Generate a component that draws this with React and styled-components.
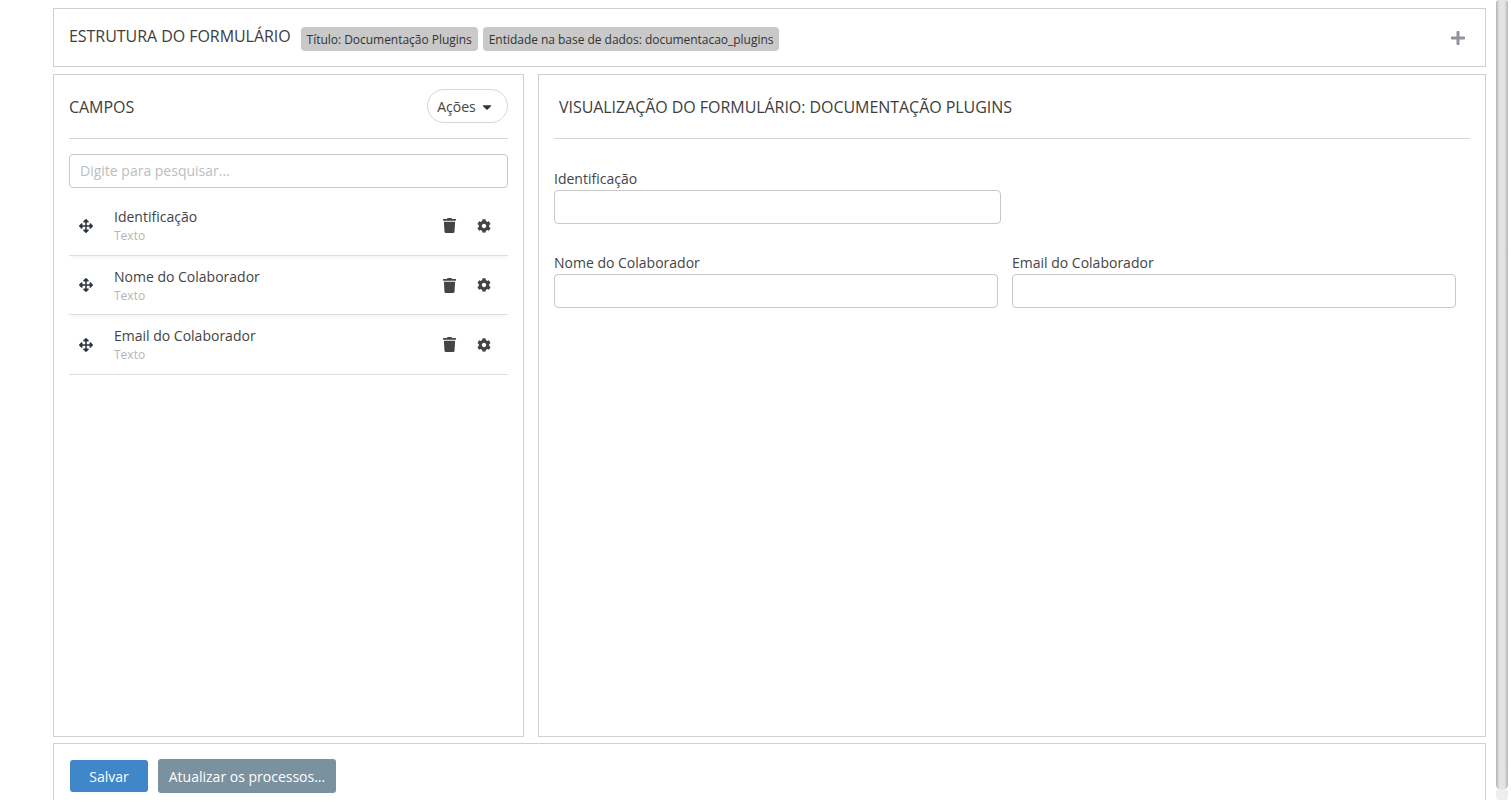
import React from "react";
import styled, { createGlobalStyle } from "styled-components";
import { FaArrowsAlt, FaTrash, FaCog, FaPlus, FaCaretDown } from "react-icons/fa";

const Global = createGlobalStyle`
  html, body { margin: 0; padding: 0; height: 100%; overflow: hidden; background: #fff; }
  body { font-family: "Open Sans", "Liberation Sans", sans-serif; color: #444; }
  * { box-sizing: border-box; }
`;

const Page = styled.div`
  display: flex;
  align-items: flex-start;
  height: 806px;
  width: 1511px;
  overflow: hidden;
`;
const Main = styled.main`
  margin-left: 53px;
  padding-top: 8px;
  display: flex;
  flex-direction: column;
  flex: none;
  width: 1433px;
  height: 800px;
`;
const Panel = styled.section`
  border: 1px solid #d0d0d0;
  background: #fff;
`;
const TopBar = styled(Panel)`
  height: 59px;
  flex: none;
  display: flex;
  align-items: center;
  padding: 0 19px 3px 15px;
`;
const Title = styled.h2`
  margin: 0;
  font-size: 16px;
  line-height: 22px;
  font-weight: 400;
  letter-spacing: -0.05px;
  color: #3d3d3d;
  white-space: nowrap;
`;
const PanelTitle = styled(Title)`
  margin-top: 2px;
`;
const PreviewTitle = styled(PanelTitle)`
  margin-left: 5px;
`;
const Badges = styled.div`
  display: flex;
  gap: 5px;
  margin-left: 10px;
  margin-top: 6px;
`;
const Badge = styled.span`
  height: 24px;
  padding: 0 6px;
  display: flex;
  align-items: center;
  background: #c9c9c9;
  border-radius: 4px;
  font-size: 12px;
  letter-spacing: -0.03px;
  color: #333;
  white-space: nowrap;
`;
const Expand = styled.span`
  margin-left: auto;
  display: flex;
  color: #8f939b;
  font-size: 16px;
  margin-top: 3px;
`;
const Columns = styled.div`
  display: flex;
  flex: none;
  gap: 14px;
  margin-top: 7px;
  height: 663px;
`;
const LeftPanel = styled(Panel)`
  width: 471px;
  flex: none;
  padding: 0 15px;
`;
const RightPanel = styled(Panel)`
  flex: 1;
  padding: 0 15px;
`;
const PanelHead = styled.header`
  height: 64px;
  border-bottom: 1px solid #d4d4d4;
  display: flex;
  align-items: center;
  justify-content: space-between;
  padding-bottom: 1px;
`;
const ActionButton = styled.button`
  width: 81px;
  height: 34px;
  border: 1px solid #d6d6d6;
  border-radius: 17px;
  background: #fff;
  font: inherit;
  font-size: 14px;
  color: #444;
  display: flex;
  align-items: center;
  justify-content: center;
  gap: 4px;
  padding: 1px 4px 0 0;
  svg { font-size: 14px; color: #333; }
`;
const Search = styled.input`
  display: block;
  width: 100%;
  height: 34px;
  margin-top: 15px;
  padding: 0 10px 2px;
  border: 1px solid #c8c8c8;
  border-radius: 4px;
  font: inherit;
  font-size: 14px;
  &::placeholder { color: #bdbdbd; opacity: 1; }
`;
const FieldList = styled.ul`
  list-style: none;
  margin: 8px 0 0;
  padding: 0;
`;
const FieldRow = styled.li`
  height: 59.5px;
  padding: 0 0 1px;
  display: flex;
  align-items: center;
  border-bottom: 1px solid #dedede;
  box-shadow: ${(p) => (p.$last ? "none" : "0 4px 4px -3px rgba(0,0,0,0.08)")};
`;
const Handle = styled.span`
  width: 45px;
  padding: 2px 0 0 10px;
  display: flex;
  font-size: 14px;
  color: #2f3441;
  flex: none;
`;
const FieldText = styled.div`
  flex: 1;
  display: flex;
  flex-direction: column;
  padding-top: 2px;
`;
const FieldName = styled.span`
  font-size: 14px;
  line-height: 21px;
  color: #444;
`;
const FieldType = styled.span`
  font-size: 12px;
  line-height: 18px;
  color: #b5b5b5;
`;
const RowIcons = styled.div`
  display: flex;
  align-items: center;
  gap: 21px;
  padding: 2px 17px 0 0;
  font-size: 14px;
  color: #444;
  svg { display: block; }
`;
const TrashIcon = styled(FaTrash)`
  font-size: 15px;
  margin-right: -1px;
`;
const FormArea = styled.form`
  padding-top: 30px;
  display: flex;
  flex-direction: column;
  gap: 29px;
`;
const FormRow = styled.div`
  display: flex;
  gap: 14px;
`;
const Field = styled.label`
  display: flex;
  flex-direction: column;
  width: ${(p) => p.$w}px;
  font-size: 14px;
  line-height: 20px;
  color: #444;
`;
const Input = styled.input`
  height: 34px;
  margin-top: 1px;
  border: 1px solid #c8c8c8;
  border-radius: 4px;
  background: #fff;
`;
const Footer = styled(Panel)`
  margin-top: 6px;
  flex: 1;
  padding: 15px 16px 0;
  display: flex;
  gap: 10px;
  align-items: flex-start;
  border-bottom: 0;
`;
const Button = styled.button`
  border: 0;
  border-radius: 3px;
  font: inherit;
  font-size: 14px;
  color: #fff;
  background: ${(p) => p.$bg};
  width: ${(p) => p.$w}px;
  height: ${(p) => p.$h}px;
  margin-top: ${(p) => p.$top || 0}px;
  padding: 0;
`;
const Scrollbar = styled.div`
  margin-left: 10px;
  width: 12px;
  flex: none;
  display: flex;
  flex-direction: column;
  height: 800px;
`;
const Thumb = styled.div`
  height: 790px;
  border-radius: 3px 3px 5px 5px;
  background: linear-gradient(90deg, #b4b4b4, #e4e4e4 30%, #e4e4e4 70%, #b4b4b4);
`;
const Track = styled.div`
  height: 10px;
  background: #eee;
  border-radius: 0 0 3px 3px;
`;

const fields = [
  ["Identificação", "Texto"],
  ["Nome do Colaborador", "Texto"],
  ["Email do Colaborador", "Texto"],
];

export default function App() {
  return (
    <>
      <Global />
      <Page>
        <Main>
          <TopBar>
            <Title>ESTRUTURA DO FORMULÁRIO</Title>
            <Badges>
              <Badge>Título: Documentação Plugins</Badge>
              <Badge>Entidade na base de dados: documentacao_plugins</Badge>
            </Badges>
            <Expand><FaPlus /></Expand>
          </TopBar>
          <Columns>
            <LeftPanel>
              <PanelHead>
                <PanelTitle>CAMPOS</PanelTitle>
                <ActionButton type="button">Ações <FaCaretDown /></ActionButton>
              </PanelHead>
              <Search placeholder="Digite para pesquisar..." />
              <FieldList>
                {fields.map(([name, type], i) => (
                  <FieldRow key={name} $last={i === fields.length - 1}>
                    <Handle><FaArrowsAlt /></Handle>
                    <FieldText>
                      <FieldName>{name}</FieldName>
                      <FieldType>{type}</FieldType>
                    </FieldText>
                    <RowIcons><TrashIcon /><FaCog /></RowIcons>
                  </FieldRow>
                ))}
              </FieldList>
            </LeftPanel>
            <RightPanel>
              <PanelHead>
                <PreviewTitle>VISUALIZAÇÃO DO FORMULÁRIO: DOCUMENTAÇÃO PLUGINS</PreviewTitle>
              </PanelHead>
              <FormArea>
                <FormRow>
                  <Field $w={447}>Identificação<Input /></Field>
                </FormRow>
                <FormRow>
                  <Field $w={444}>Nome do Colaborador<Input /></Field>
                  <Field $w={444}>Email do Colaborador<Input /></Field>
                </FormRow>
              </FormArea>
            </RightPanel>
          </Columns>
          <Footer>
            <Button type="button" $bg="#3f87c9" $w={78} $h={32} $top={1}>Salvar</Button>
            <Button type="button" $bg="#7a91a0" $w={178} $h={34}>Atualizar os processos...</Button>
          </Footer>
        </Main>
        <Scrollbar>
          <Thumb />
          <Track />
        </Scrollbar>
      </Page>
    </>
  );
}
